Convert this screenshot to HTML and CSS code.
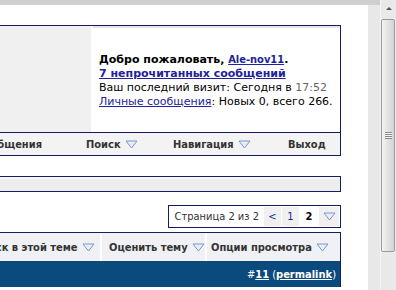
FILE: index.html
```html
<!DOCTYPE html>
<html lang="ru">
<head>
<meta charset="utf-8">
<title>Форум</title>
<link rel="stylesheet" href="styles.css">
</head>
<body>
<div class="window">
  <div class="viewport">
    <div class="topband"></div>
    <div class="content">
      <div class="page">
        <div class="box header-box">
          <div class="header-row">
            <div class="logo-cell"></div>
            <div class="welcome-cell">
              <div class="welcome"><b>Добро пожаловать, <a href="#">Ale-nov11</a>.</b></div>
              <div><a href="#" class="bold">7 непрочитанных сообщений</a></div>
              <div>Ваш последний визит: Сегодня в <span class="time">17:52</span></div>
              <div><a href="#">Личные сообщения</a>: Новых 0, всего 266.</div>
            </div>
          </div>
          <div class="navbar">
            <div class="nav-cell nav-first"><span>Новые сообщения</span></div>
            <div class="nav-cell nav-search"><span>Поиск <span class="tri"></span></span></div>
            <div class="nav-cell nav-navi"><span>Навигация <span class="tri"></span></span></div>
            <div class="nav-cell nav-exit"><span>Выход</span></div>
          </div>
        </div>

        <div class="box crumb-box"></div>

        <div class="pager-wrap">
          <div class="pager">
            <div class="pg-cell pg-label">Страница 2 из 2</div>
            <div class="pg-cell pg-link"><a href="#">&lt;</a></div>
            <div class="pg-cell pg-link"><a href="#">1</a></div>
            <div class="pg-cell pg-current">2</div>
            <div class="pg-cell pg-menu"><span class="tri"></span></div>
          </div>
        </div>

        <div class="tools">
          <div class="tool tool-first"><span>Поиск в этой теме <span class="tri"></span></span></div>
          <div class="tool tool-rate"><span>Оценить тему <span class="tri"></span></span></div>
          <div class="tool tool-view"><span>Опции просмотра <span class="tri"></span></span></div>
        </div>
        <div class="post-head"><span>#<a href="#" class="bold">11</a> (<a href="#" class="bold">permalink</a>)</span></div>
      </div>
      <div class="gutter"></div>
    </div>
  </div>
  <div class="scrollbar">
    <div class="arrow-up"></div>
    <div class="thumb"><div class="grip"></div></div>
  </div>
</div>
</body>
</html>
```
FILE: styles.css
```css
html, body {
  margin: 0;
  padding: 0;
  height: 100%;
  overflow: hidden;
}
body {
  font-family: "DejaVu Sans", Verdana, sans-serif;
  font-size: 11px;
  color: #000;
  background: #ebebeb;
}
a { color: #22229c; }
.bold { font-weight: bold; }

.window {
  display: flex;
  width: 396px;
  height: 290px;
}
.viewport {
  width: 380px;
  display: flex;
  flex-direction: column;
}
.topband {
  height: 5px;
  background: #cfcfcf;
}
.content {
  flex: 1;
  display: flex;
}
.page {
  width: 368px;
  background: #fff;
  padding-top: 20px;
}
.gutter {
  width: 12px;
  background: #e8e8e8;
}

.box {
  width: 340px;
  border: 1px solid #141c64;
  border-left: none;
}
.header-row {
  display: flex;
  height: 106px;
}
.logo-cell {
  width: 91px;
  background: #f0f0f0;
  border-right: 2px solid #fff;
}
.welcome-cell {
  flex: 1;
  display: flex;
  flex-direction: column;
  justify-content: center;
  padding-left: 6px;
  padding-top: 2px;
  line-height: 14px;
  white-space: nowrap;
  border-top: 2px solid #e4e4e4;
}
.welcome a { font-family: "DejaVu Sans Condensed", "DejaVu Sans", sans-serif; }
.time { color: #666; }

/* Tahoma-like menu text */
.navbar, .tools, .pager, .post-head {
  font-family: "DejaVu Sans Condensed", "DejaVu Sans", sans-serif;
}

.navbar {
  display: flex;
  height: 22px;
  border-top: 1px solid #141c64;
  background: #f3f3f3;
  font-weight: bold;
  color: #333;
}
.nav-cell {
  display: flex;
  align-items: center;
  white-space: nowrap;
  box-sizing: border-box;
}
.nav-cell > span { flex: none; }
.nav-first {
  width: 86px;
  overflow: hidden;
  justify-content: flex-end;
  padding-right: 44px;
}
.nav-search { width: 87px; }
.nav-navi { width: 115px; }
.nav-exit { flex: 1; }

.tri {
  display: inline-block;
  width: 13px;
  height: 9px;
  margin-left: 1px;
  background-image: url("data:image/svg+xml;utf8,<svg xmlns='http://www.w3.org/2000/svg' width='13' height='9' viewBox='0 0 13 9'><path d='M1 1 H12 L6.5 8 Z' fill='%23e8eef8' stroke='%237f96c4' stroke-width='1'/></svg>");
  vertical-align: -1px;
}

.crumb-box {
  margin-top: 20px;
  height: 14px;
  background: #ededed;
  border-top: 1px solid #141c64;
  box-shadow: inset 0 2px 0 #f6f6f6;
}

.pager-wrap {
  width: 341px;
  display: flex;
  justify-content: flex-end;
  margin-top: 13px;
}
.pager {
  display: flex;
  height: 23px;
  border: 1px solid #141c64;
  background: #fff;
  gap: 1px;
  padding: 1px;
  box-sizing: border-box;
}
.pg-cell {
  display: flex;
  align-items: center;
  justify-content: center;
  background: #f0f0f0;
}
.pg-label {
  padding: 0 4px 0 5px;
  color: #333;
  background: #fff;
}
.pg-link { width: 17px; }
.pg-link a { text-decoration: none; }
.pg-current { width: 18px; font-weight: bold; background: #fff; }
.pg-menu { width: 20px; }
.pg-menu .tri { margin-left: 0; }

.tools {
  margin-top: 4px;
  display: flex;
  width: 340px;
  height: 28px;
  border-top: 1px solid #141c64;
  border-right: 1px solid #141c64;
  gap: 2px;
  background: #fff;
  font-weight: bold;
  color: #333;
}
.tool {
  display: flex;
  align-items: center;
  white-space: nowrap;
  background: #eff1f4;
  box-sizing: border-box;
}
.tool > span { flex: none; }
.tool-first {
  width: 100px;
  overflow: hidden;
  justify-content: flex-end;
  padding-right: 5px;
}
.tool-rate { width: 103px; padding-left: 7px; }
.tool-view { flex: 1; padding-left: 4px; }

.post-head {
  width: 336px;
  height: 26px;
  padding-right: 4px;
  background: #0b4a7c;
  border-right: 1px solid #141c64;
  color: #fff;
  display: flex;
  align-items: center;
  justify-content: flex-end;
  font-size: 11px;
}
.post-head a { color: #fff; }

.scrollbar {
  width: 16px;
  background: #e9e9e9;
  border-left: 1px solid #f4f4f4;
  box-sizing: border-box;
}
.arrow-up {
  width: 0;
  height: 0;
  margin: 7px auto 0;
  border-left: 3px solid transparent;
  border-right: 3px solid transparent;
  border-bottom: 3px solid #555;
}
.thumb {
  margin: 9px 0 0 0;
  width: 14px;
  height: 233px;
  box-sizing: border-box;
  border: 1px solid #9b9b9b;
  border-radius: 2px;
  background: linear-gradient(to right, #f4f4f4, #e2e2e2 50%, #d4d4d4);
  display: flex;
  justify-content: center;
  padding-top: 112px;
}
.grip {
  width: 7px;
  height: 7px;
  background: repeating-linear-gradient(to bottom, #8a8a8a 0 1px, #f6f6f6 1px 2px);
}
```
